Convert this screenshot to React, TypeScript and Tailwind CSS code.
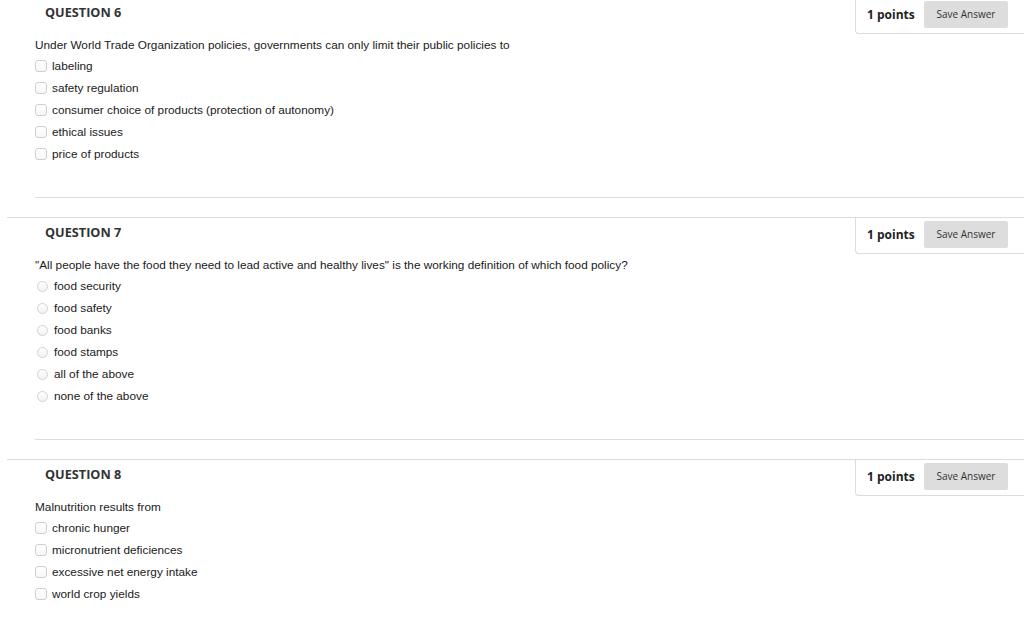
import React from "react";

type Q = {
  num: number;
  text: string;
  kind: "check" | "radio";
  options: string[];
};

const questions: Q[] = [
  {
    num: 6,
    text: "Under World Trade Organization policies, governments can only limit their public policies to",
    kind: "check",
    options: [
      "labeling",
      "safety regulation",
      "consumer choice of products (protection of autonomy)",
      "ethical issues",
      "price of products",
    ],
  },
  {
    num: 7,
    text: "\"All people have the food they need to lead active and healthy lives\" is the working definition of which food policy?",
    kind: "radio",
    options: [
      "food security",
      "food safety",
      "food banks",
      "food stamps",
      "all of the above",
      "none of the above",
    ],
  },
  {
    num: 8,
    text: "Malnutrition results from",
    kind: "check",
    options: [
      "chronic hunger",
      "micronutrient deficiences",
      "excessive net energy intake",
      "world crop yields",
    ],
  },
];

function Question({ q, first }: { q: Q; first?: boolean }) {
  return (
    <div className={first ? "-mt-[3px]" : ""}>
      <div className="ml-[7px] border-t border-[#dcdcdc]">
        <div className="flex h-[35px] items-start justify-between">
          <h3
            className="pl-[38px] pt-[5px] text-[12.7px] font-bold leading-[18px] text-[#333]"
            style={{ fontFamily: '"Open Sans", sans-serif' }}
          >
            QUESTION {q.num}
          </h3>
          <div className="flex h-[36px] w-[169px] shrink-0 items-start rounded-bl-[4px] border-b border-l border-[#dcdcdc] pl-[11px] pt-[3px]">
            <span
              className="w-[57px] text-[12px] font-bold leading-[27px] text-[#222]"
              style={{ fontFamily: '"Open Sans", sans-serif' }}
            >
              1 points
            </span>
            <button
              className="h-[27px] w-[84px] rounded-[2px] bg-[#dddddd] text-[10px] text-[#333]"
              style={{ fontFamily: '"Open Sans", sans-serif' }}
            >
              Save Answer
            </button>
          </div>
        </div>
        <div
          className="pl-[28px] text-[11.8px] leading-[22px] text-[#1a1a1a]"
          style={{ fontFamily: '"Liberation Sans", Arial, sans-serif' }}
        >
          <div className="h-[22px] pt-px">{q.text}</div>
          {q.options.map((o) => (
            <div key={o} className="flex h-[22px] items-center">
              {q.kind === "check" ? (
                <span className="mr-[5px] block h-[12px] w-[12px] rounded-[3px] border border-[#cfcfcf] bg-gradient-to-b from-white to-[#f7f7f7]" />
              ) : (
                <span className="ml-[2px] mr-[6px] block h-[11px] w-[11px] rounded-full border border-[#d2d2d2] bg-gradient-to-b from-white to-[#f2f2f2]" />
              )}
              <span>{o}</span>
            </div>
          ))}
        </div>
        <div className="ml-[28px] mt-[32px] border-b border-[#dcdcdc]" />
      </div>
      <div className="h-[19px]" />
    </div>
  );
}

export default function App() {
  return (
    <div className="h-[619px] w-[1024px] overflow-hidden bg-white">
      {questions.map((q, i) => (
        <Question key={q.num} q={q} first={i === 0} />
      ))}
    </div>
  );
}
